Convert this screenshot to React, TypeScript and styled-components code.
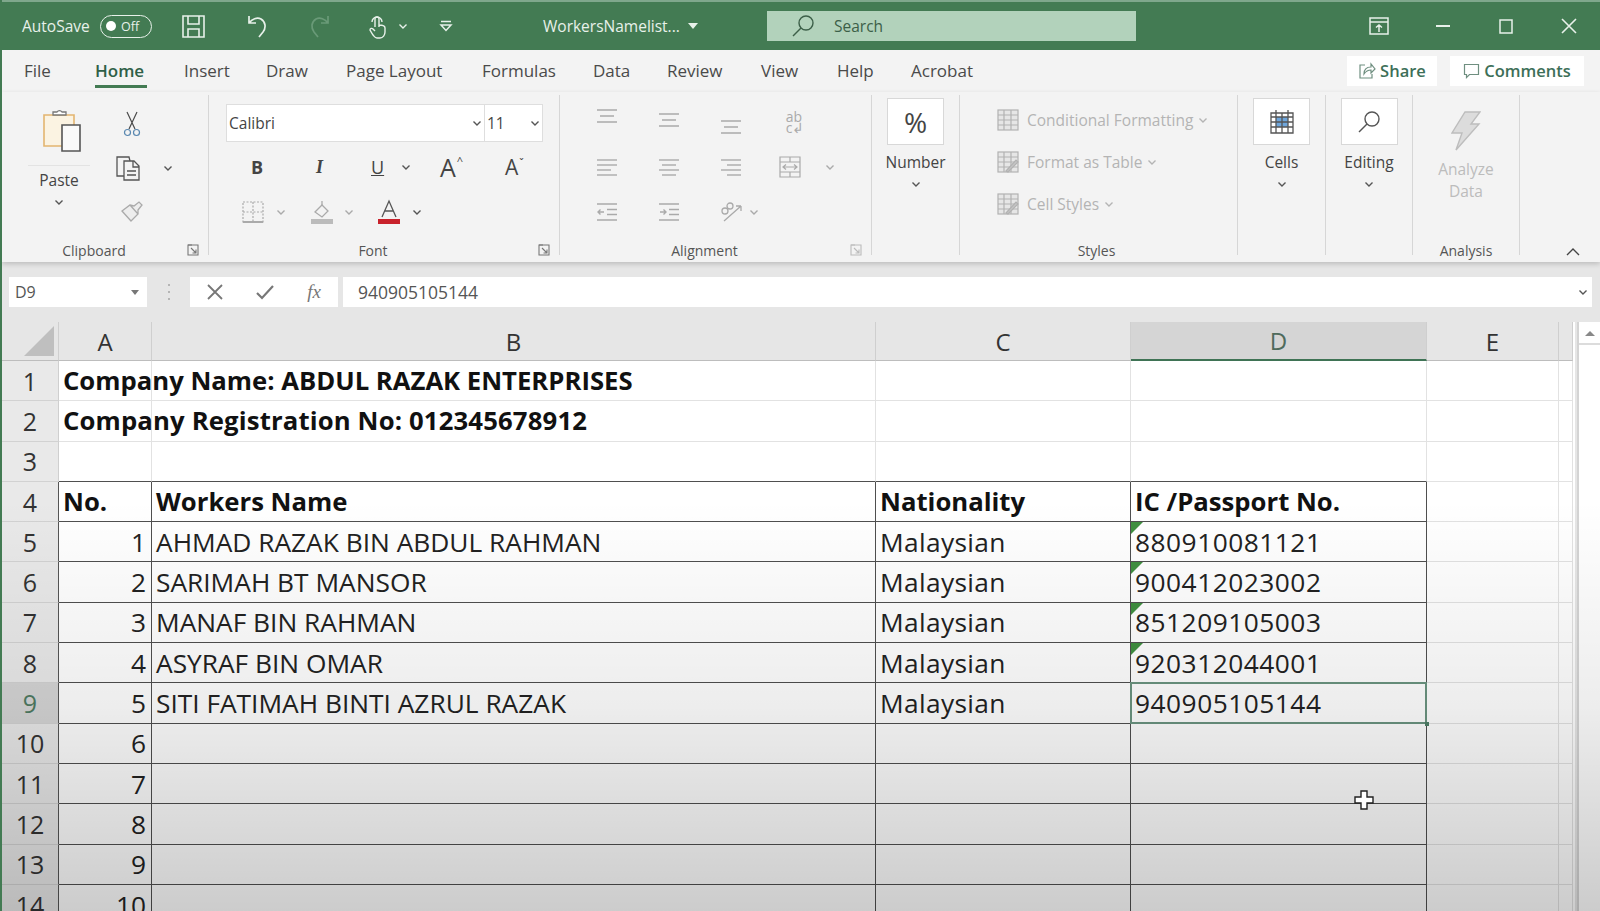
import React from "react";
import styled, { createGlobalStyle } from "styled-components";

const GlobalStyle = createGlobalStyle`
  html, body { margin: 0; padding: 0; height: 100%; overflow: hidden; background: #f3f3f3; }
  * { box-sizing: border-box; }
`;

const uiFont = `"Open Sans", "Liberation Sans", sans-serif`;
const cellFont = `"Open Sans", Lato, sans-serif`;

const Page = styled.div`
  position: relative;
  width: 1600px;
  height: 911px;
  overflow: hidden;
  display: flex;
  flex-direction: column;
  border-left: 2px solid #437b53;
  font-family: ${uiFont};
  color: #444;
`;

/* title bar */
const TitleBar = styled.div`
  height: 50px;
  flex: none;
  margin-left: -2px;
  display: flex;
  align-items: center;
  background: #437b53;
  border-top: 2px solid #7fa78c;
  padding-left: 22px;
  color: #e8f1ea;
  font-size: 15.5px;
`;
const AutoSave = styled.span`
  width: 78px;
`;
const Toggle = styled.div`
  width: 52px;
  height: 23px;
  border: 1.5px solid #e8f1ea;
  border-radius: 12px;
  display: flex;
  align-items: center;
  padding-left: 5px;
  gap: 5px;
  font-size: 12.5px;
  &::before {
    content: "";
    width: 10px;
    height: 10px;
    border-radius: 50%;
    background: #fff;
  }
`;
const Slot = styled.div<{ $w: number }>`
  width: ${(p) => p.$w}px;
  flex: none;
  display: flex;
  align-items: center;
`;
const FileTitle = styled.span`
  width: 145px;
  flex: none;
  white-space: nowrap;
`;
const SearchBox = styled.div`
  width: 369px;
  height: 30px;
  margin-left: 69px;
  flex: none;
  background: #b2d2bb;
  display: flex;
  align-items: center;
  padding-left: 24px;
  gap: 19px;
  color: #3c5f48;
  font-size: 15.5px;
`;
const WindowButtons = styled.div`
  margin-left: 233px;
  display: flex;
  align-items: center;
`;

/* tabs */
const TabRow = styled.div`
  height: 42px;
  flex: none;
  display: flex;
  align-items: center;
  background: #f3f3f3;
  padding-left: 22px;
  font-size: 17px;
`;
const Tab = styled.div<{ $w: number; $active?: boolean }>`
  width: ${(p) => p.$w}px;
  flex: none;
  height: 42px;
  line-height: 42px;
  white-space: nowrap;
  position: relative;
  color: ${(p) => (p.$active ? "#2f5f47" : "#4a4a4a")};
  font-weight: ${(p) => (p.$active ? 600 : 400)};
  &::after {
    content: "";
    display: ${(p) => (p.$active ? "block" : "none")};
    position: absolute;
    left: 0;
    width: 52px;
    top: 35px;
    height: 3px;
    background: #437b53;
  }
`;
const TabActions = styled.div`
  margin-left: 372px;
  display: flex;
  gap: 13px;
`;
const ActionButton = styled.div<{ $w: number }>`
  width: ${(p) => p.$w}px;
  height: 30px;
  background: #fff;
  display: flex;
  align-items: center;
  justify-content: center;
  gap: 4px;
  color: #3d6f58;
  font-size: 16.5px;
  font-weight: 600;
  line-height: 28px;
`;

/* ribbon */
const Ribbon = styled.div`
  height: 170px;
  flex: none;
  display: flex;
  background: #f3f3f3;
  padding-top: 3px;
  position: relative;
  box-shadow: 0 2px 5px rgba(0, 0, 0, 0.18);
  z-index: 2;
`;
const Group = styled.div<{ $w: number; $noLine?: boolean }>`
  width: ${(p) => p.$w}px;
  flex: none;
  height: 160px;
  position: relative;
  display: flex;
  flex-direction: column;
  border-right: ${(p) => (p.$noLine ? "none" : "1.5px solid #d6d6d6")};
`;
const GroupBody = styled.div`
  flex: 1;
  min-height: 0;
  display: flex;
`;
const GroupLabel = styled.div<{ $pr?: number }>`
  height: 13px;
  margin-bottom: -2px;
  padding-right: ${(p) => p.$pr ?? 0}px;
  text-align: center;
  font-size: 14px;
  line-height: 13px;
  color: #555;
`;
const Launcher = styled.div`
  position: absolute;
  right: 9px;
  bottom: -1px;
  display: flex;
`;
const PasteCol = styled.div`
  width: 62px;
  margin-left: 26px;
  flex: none;
  display: flex;
  flex-direction: column;
  align-items: center;
  padding-top: 13px;
  font-size: 15.5px;
`;
const PasteGlyph = styled.svg`
  margin-left: 6px;
`;
const PasteRule = styled.div`
  width: 62px;
  height: 1px;
  background: #e3e3e3;
  margin: 13px 0 3px;
`;
const ClipTools = styled.div`
  margin-left: 26px;
  display: flex;
  flex-direction: column;
  padding-top: 17px;
  gap: 20px;
`;
const ClipTool = styled.div<{ $pl?: number }>`
  height: 24px;
  padding-left: ${(p) => p.$pl ?? 0}px;
  display: flex;
  align-items: center;
  gap: 23px;
`;
const FontCol = styled.div`
  padding: 9px 0 0 17px;
  display: flex;
  flex-direction: column;
`;
const SelectRow = styled.div`
  display: flex;
  height: 38px;
  width: 317px;
  margin-bottom: 2px;
  background: #fff;
  border: 1.5px solid #dedede;
  font-size: 15.5px;
  color: #444;
`;
const SelectPart = styled.div<{ $w: number }>`
  width: ${(p) => p.$w}px;
  flex: none;
  display: flex;
  align-items: center;
  justify-content: space-between;
  padding: 0 2px 0 2px;
  border-right: 1.5px solid #dedede;
  &:last-child { border-right: none; flex: 1; }
`;
const ToolRow = styled.div<{ $h: number; $pl?: number }>`
  height: ${(p) => p.$h}px;
  padding-left: ${(p) => p.$pl ?? 0}px;
  display: flex;
  align-items: center;
`;
const Glyph = styled.span<{ $size?: number; $bold?: boolean; $italic?: boolean; $under?: boolean }>`
  font-size: ${(p) => p.$size ?? 18}px;
  font-weight: ${(p) => (p.$bold ? 700 : 400)};
  font-style: ${(p) => (p.$italic ? "italic" : "normal")};
  text-decoration: ${(p) => (p.$under ? "underline" : "none")};
  color: #444;
  line-height: 1;
  display: inline-flex;
  align-items: flex-start;
  font-family: ${(p) => (p.$italic ? `"Liberation Serif", serif` : uiFont)};
  sup { font-size: 11px; line-height: 1; margin-left: 1px; }
`;
const AlignGrid = styled.div`
  padding: 4px 0 0 16px;
  display: grid;
  grid-template-columns: 62px 62px 62px 62px 12px;
  grid-auto-rows: 45px;
  align-items: center;
  justify-items: center;
`;
const AlignOrient = styled.div`
  display: flex;
  align-items: center;
  gap: 6px;
  padding-left: 16px;
`;
const MergeGlyph = styled.svg`
  margin-right: 6px;
`;
const WrapGlyph = styled.div`
  font-size: 14px;
  line-height: 11px;
  color: #aaa;
  text-align: left;
  padding-left: 4px;
`;
const BigTool = styled.div`
  flex: 1;
  display: flex;
  flex-direction: column;
  align-items: center;
  padding-top: 3px;
  font-size: 15.5px;
`;
const BigBox = styled.div`
  width: 57px;
  height: 47px;
  background: #fff;
  border: 1.5px solid #d8d8d8;
  display: flex;
  align-items: center;
  justify-content: center;
  margin-bottom: 6px;
  color: #444;
  font-size: 28px;
`;
const ChevronLine = styled.div`
  height: 14px;
  margin-top: 4px;
  display: flex;
  align-items: center;
  justify-content: center;
`;
const StyleList = styled.div`
  padding: 10px 0 0 37px;
  display: flex;
  flex-direction: column;
  gap: 12px;
`;
const StyleItem = styled.div`
  height: 30px;
  display: flex;
  align-items: center;
  gap: 8px;
  color: #b4b4b4;
  font-size: 15.5px;
  white-space: nowrap;
  svg:last-child { margin-left: -3px; }
`;
const AnalyzeTool = styled.div`
  flex: 1;
  display: flex;
  flex-direction: column;
  align-items: center;
  gap: 7px;
  padding-top: 15px;
  color: #bcbcbc;
  font-size: 15.5px;
  line-height: 21.5px;
  text-align: center;
`;
const Collapse = styled.div`
  flex: 1;
  display: flex;
  align-items: flex-end;
  justify-content: center;
  padding: 0 0 0 26px;
  height: 161px;
`;

/* formula bar */
const FormulaBar = styled.div`
  height: 60px;
  flex: none;
  background: #e6e6e6;
  display: flex;
  padding: 15px 8px 0 7px;
  font-size: 16px;
  color: #555;
`;
const NameBox = styled.div`
  width: 138px;
  height: 30px;
  background: #fff;
  display: flex;
  align-items: center;
  justify-content: space-between;
  padding: 0 8px 0 6px;
`;
const BarDots = styled.div`
  width: 43px;
  height: 30px;
  display: flex;
  align-items: center;
  justify-content: center;
`;
const FxBox = styled.div`
  width: 148px;
  height: 30px;
  background: #fff;
  display: grid;
  grid-template-columns: 50px 50px 48px;
  align-items: center;
  justify-items: center;
`;
const FxGlyph = styled.span`
  font-family: "Liberation Serif", serif;
  font-style: italic;
  font-size: 19px;
  color: #777;
`;
const FormulaInput = styled.div`
  flex: 1;
  height: 30px;
  margin-left: 5px;
  background: #fff;
  display: flex;
  align-items: center;
  justify-content: space-between;
  padding: 0 4px 0 15px;
  font-size: 17.5px;
`;

/* sheet */
const SheetArea = styled.div`
  flex: 1;
  min-height: 0;
  display: flex;
  background: #e6e6e6;
  overflow: hidden;
`;
const SheetGrid = styled.div`
  width: 1573px;
  flex: none;
  display: grid;
  grid-template-columns: 57px 93px 724px 255px 296px 132px 14px;
  grid-template-rows: 39px;
  grid-auto-rows: 40.3px;
  background: #fff;
`;
const Corner = styled.div`
  background: #e6e6e6;
  border-right: 1px solid #cfcfcf;
  border-bottom: 1px solid #bdbdbd;
  display: flex;
  align-items: flex-end;
  justify-content: flex-end;
  padding: 0 3px 3px 0;
`;
const ColHead = styled.div<{ $sel?: boolean }>`
  background: ${(p) => (p.$sel ? "#d5d5d5" : "#e6e6e6")};
  border-right: 1px solid #cfcfcf;
  border-bottom: ${(p) => (p.$sel ? "2px solid #3f7355" : "1px solid #bdbdbd")};
  display: flex;
  align-items: center;
  justify-content: center;
  font-size: 24px;
  color: ${(p) => (p.$sel ? "#4f6b5c" : "#333")};
`;
const RowHead = styled.div<{ $sel?: boolean; $dark?: boolean }>`
  background: ${(p) => (p.$sel ? "#d5d5d5" : "#e9e9e9")};
  border-bottom: 1px solid #d2d2d2;
  border-right: 1px solid ${(p) => (p.$dark ? "#555" : "#cfcfcf")};
  display: flex;
  align-items: center;
  justify-content: center;
  font-family: ${cellFont};
  font-size: 25px;
  color: ${(p) => (p.$sel ? "#4f7b62" : "#333")};
`;
const Cell = styled.div<{ $right?: boolean; $bold?: boolean; $r?: boolean; $b?: boolean; $flag?: boolean; $sel?: boolean; $ls?: number }>`
  position: relative;
  display: flex;
  align-items: center;
  justify-content: ${(p) => (p.$right ? "flex-end" : "flex-start")};
  padding: 0 5px 0 4px;
  white-space: nowrap;
  font-family: ${cellFont};
  font-size: ${(p) => (p.$bold ? 25.7 : 26.3)}px;
  letter-spacing: ${(p) => p.$ls ?? 0}px;
  font-weight: ${(p) => (p.$bold ? 700 : 400)};
  color: ${(p) => (p.$bold ? "#111" : "#222")};
  border-right: 1px solid ${(p) => (p.$r ? "#4f4f4f" : "#e2e2e2")};
  border-bottom: 1px solid ${(p) => (p.$b ? "#4f4f4f" : "#e2e2e2")};
  &::before {
    content: "";
    display: ${(p) => (p.$flag ? "block" : "none")};
    position: absolute;
    left: 0;
    top: 0;
    border-top: 12px solid #3f8f3f;
    border-right: 12px solid transparent;
  }
  &::after {
    content: "";
    display: ${(p) => (p.$sel ? "block" : "none")};
    position: absolute;
    inset: -1px -1px -1px -1px;
    border: 2px solid #6b9480;
  }
`;
const FillHandle = styled.span`
  position: absolute;
  right: -3px;
  bottom: -3px;
  width: 4px;
  height: 4px;
  background: #4f7f68;
  z-index: 1;
`;
const Scrollbar = styled.div`
  flex: 1;
  margin-left: 2px;
  background: #fff;
  border-left: 2px solid #d4d4d4;
`;
const ScrollUp = styled.div`
  height: 22px;
  margin-top: 1px;
  display: flex;
  align-items: center;
  justify-content: center;
  border-bottom: 2px solid #dcdcdc;
  background: #fff;
  &::before {
    content: "";
    border-left: 5px solid transparent;
    border-right: 5px solid transparent;
    border-bottom: 5px solid #888;
  }
`;
const Dim = styled.div`
  position: absolute;
  left: -2px;
  right: 0;
  top: 500px;
  bottom: 0;
  z-index: 3;
  pointer-events: none;
  background: linear-gradient(to bottom, rgba(0, 0, 0, 0) 0%, rgba(0, 0, 0, 0.07) 50%, rgba(0, 0, 0, 0.2) 100%);
`;
const CursorMark = styled.svg`
  position: absolute;
  left: 1352px;
  top: 790px;
  z-index: 4;
`;

/* icons */
const Chev = ({ c = "#555", s = 10 }: { c?: string; s?: number }) => (
  <svg width={s} height={s} viewBox="0 0 10 10" fill="none" stroke={c} strokeWidth="1.4" style={{ flex: "none" }}>
    <path d="M1.5 3.5 5 7l3.5-3.5" />
  </svg>
);
const Lines = ({ kind, c = "#aaa" }: { kind: "c" | "l" | "r"; c?: string }) => {
  const s = kind === "l" ? [[1, 21], [1, 21], [1, 15], [1, 21]] : kind === "r" ? [[1, 21], [7, 21], [1, 21], [7, 21]] : [[1, 21], [4, 18], [1, 21], [4, 18]];
  return (
    <svg width="22" height="20" viewBox="0 0 22 20" stroke={c} strokeWidth="1.4">
      {s.map(([a, b], i) => (
        <path key={i} d={`M${a} ${3 + i * 5}H${b}`} />
      ))}
    </svg>
  );
};
const VAlign = ({ top }: { top: number }) => (
  <svg width="22" height="30" viewBox="0 0 22 30" stroke="#aaa" strokeWidth="1.4">
    <path d={`M1 ${top}H21M4 ${top + 6}H18M1 ${top + 12}H21`} />
  </svg>
);
const Indent = ({ rev }: { rev?: boolean }) => (
  <svg width="22" height="20" viewBox="0 0 22 20" stroke="#aaa" strokeWidth="1.4" fill="none">
    <path d="M1 2H21M11 7.5H21M11 12.5H21M1 18H21" />
    <path d={rev ? "M8 10H2M4.5 7.5 2 10l2.5 2.5" : "M2 10H8M5.5 7.5 8 10l-2.5 2.5"} />
  </svg>
);
const LauncherIcon = ({ c = "#777" }: { c?: string }) => (
  <svg width="12" height="12" viewBox="0 0 12 12" fill="none" stroke={c} strokeWidth="1.1">
    <path d="M5 1H1v10h10V7" />
    <path d="M1 1h10v6M4 4l5 5M9 5.5V9H5.5" />
  </svg>
);
const TableIcon = ({ brush }: { brush?: boolean }) => (
  <svg width="22" height="22" viewBox="0 0 22 22" fill="none" stroke="#b2b2b2" strokeWidth="1.2">
    <rect x="1" y="1" width="20" height="20" fill="#e6e6e6" />
    <path d="M1 6h20M1 11h20M1 16h20M7 1v20M14 1v20" />
    {brush && <path d="M9 20 19 9l2 2-10 10z" fill="#c4c4c4" />}
  </svg>
);

const rows: [string, string, string, string][] = [
  ["1", "AHMAD RAZAK BIN ABDUL RAHMAN", "Malaysian", "880910081121"],
  ["2", "SARIMAH BT MANSOR", "Malaysian", "900412023002"],
  ["3", "MANAF BIN RAHMAN", "Malaysian", "851209105003"],
  ["4", "ASYRAF BIN OMAR", "Malaysian", "920312044001"],
  ["5", "SITI FATIMAH BINTI AZRUL RAZAK", "Malaysian", "940905105144"],
  ["6", "", "", ""],
  ["7", "", "", ""],
  ["8", "", "", ""],
  ["9", "", "", ""],
  ["10", "", "", ""],
];

const tabs: [string, number][] = [
  ["File", 71], ["Home", 89], ["Insert", 82], ["Draw", 80], ["Page Layout", 136], ["Formulas", 111],
  ["Data", 74], ["Review", 94], ["View", 76], ["Help", 74], ["Acrobat", 64],
];

const SheetRows = () => (
  <>
    {[1, 2, 3].map((n) => (
      <React.Fragment key={n}>
        <RowHead>{n}</RowHead>
        <Cell $bold $b={n === 3} $ls={n === 2 ? 0.15 : 0}>
          {n === 1 && "Company Name: ABDUL RAZAK ENTERPRISES"}
          {n === 2 && "Company Registration No: 012345678912"}
        </Cell>
        <Cell $b={n === 3} />
        <Cell $b={n === 3} />
        <Cell $b={n === 3} />
        <Cell />
        <Cell />
      </React.Fragment>
    ))}
    <RowHead $dark>4</RowHead>
    <Cell $bold $r $b>No.</Cell>
    <Cell $bold $r $b>Workers Name</Cell>
    <Cell $bold $r $b>Nationality</Cell>
    <Cell $bold $r $b>IC /Passport No.</Cell>
    <Cell />
    <Cell />
    {rows.map((r, i) => (
      <React.Fragment key={r[0]}>
        <RowHead $dark $sel={i === 4}>{i + 5}</RowHead>
        <Cell $right $r $b>{r[0]}</Cell>
        <Cell $r $b>{r[1]}</Cell>
        <Cell $r $b $ls={0.35}>{r[2]}</Cell>
        <Cell $r $b $ls={0.5} $flag={i < 4} $sel={i === 4}>
          {r[3]}
          {i === 4 && <FillHandle />}
        </Cell>
        <Cell />
        <Cell />
      </React.Fragment>
    ))}
  </>
);

export default function App() {
  return (
    <Page>
      <GlobalStyle />
      <TitleBar>
        <AutoSave>AutoSave</AutoSave>
        <Toggle>Off</Toggle>
        <Slot $w={30} />
        <Slot $w={65}>
          <svg width="23" height="23" viewBox="0 0 23 23" fill="none" stroke="#e8f1ea" strokeWidth="1.6">
            <path d="M1 1h21v21H1zM6 1v8h11V1M6 22v-8h11v8" />
          </svg>
        </Slot>
        <Slot $w={61}>
          <svg width="22" height="24" viewBox="0 0 22 24" fill="none" stroke="#e8f1ea" strokeWidth="1.7">
            <path d="M2 2v7h7M2 9c3-4 8-6 12-4 5 3 5 9 2 13l-4 5" />
          </svg>
        </Slot>
        <Slot $w={61}>
          <svg width="22" height="24" viewBox="0 0 22 24" fill="none" stroke="#6a9a78" strokeWidth="1.7">
            <path d="M20 2v7h-7M20 9c-3-4-8-6-12-4-5 3-5 9-2 13l4 5" />
          </svg>
        </Slot>
        <Slot $w={29}>
          <svg width="18" height="25" viewBox="0 0 18 25" fill="none" stroke="#e8f1ea" strokeWidth="1.4">
            <path d="M6 13V5a2 2 0 0 1 4 0v8M10 11c3 0 6 1 6 3v4c0 3-2 6-5 6H8c-2 0-3-2-4-3l-3-5c0-2 2-2 3-1l2 2" />
            <path d="M3 8a5 5 0 1 1 10 0" />
          </svg>
        </Slot>
        <Slot $w={41}><Chev c="#e8f1ea" /></Slot>
        <Slot $w={104}>
          <svg width="14" height="12" viewBox="0 0 14 12" fill="none" stroke="#e8f1ea" strokeWidth="1.5">
            <path d="M2 1.5h10M2 5h10L7 10.5z" />
          </svg>
        </Slot>
        <FileTitle>WorkersNamelist...</FileTitle>
        <svg width="10" height="6" viewBox="0 0 10 6" fill="#e8f1ea"><path d="M0 0h10L5 6z" /></svg>
        <SearchBox>
          <svg width="24" height="22" viewBox="0 0 24 22" fill="none" stroke="#3c5f48" strokeWidth="1.4">
            <circle cx="15" cy="8" r="7" />
            <path d="M10 13 2 21" />
          </svg>
          Search
        </SearchBox>
        <WindowButtons>
          <Slot $w={67}>
            <svg width="20" height="18" viewBox="0 0 20 18" fill="none" stroke="#e8f1ea" strokeWidth="1.5">
              <path d="M1 1h18v16H1zM1 5h18M10 15V8M7 10.5 10 8l3 2.5" />
            </svg>
          </Slot>
          <Slot $w={63}>
            <svg width="14" height="2" viewBox="0 0 14 2"><path d="M0 1h14" stroke="#e8f1ea" strokeWidth="2" /></svg>
          </Slot>
          <Slot $w={62}>
            <svg width="14" height="15" viewBox="0 0 14 15" fill="none" stroke="#e8f1ea" strokeWidth="1.5"><path d="M1 1h12v13H1z" /></svg>
          </Slot>
          <Slot $w={20}>
            <svg width="16" height="16" viewBox="0 0 16 16" stroke="#e8f1ea" strokeWidth="1.6"><path d="m1 1 14 14M15 1 1 15" /></svg>
          </Slot>
        </WindowButtons>
      </TitleBar>

      <TabRow>
        {tabs.map(([t, w]) => (
          <Tab key={t} $w={w} $active={t === "Home"}>{t}</Tab>
        ))}
        <TabActions>
          <ActionButton $w={90}>
            <svg width="18" height="18" viewBox="0 0 18 18" fill="none" stroke="#6f8f80" strokeWidth="1.2">
              <path d="M7 3H2v13h12v-4M6 12c0-5 3-7 7-7V2l4 5-4 4V8c-3 0-5 1-7 4z" />
            </svg>
            Share
          </ActionButton>
          <ActionButton $w={134}>
            <svg width="17" height="17" viewBox="0 0 17 17" fill="none" stroke="#6f8f80" strokeWidth="1.2">
              <path d="M1.5 1.5h14v10h-9l-3 3v-3h-2z" />
            </svg>
            Comments
          </ActionButton>
        </TabActions>
      </TabRow>

      <Ribbon>
        <Group $w={207}>
          <GroupBody>
            <PasteCol>
              <PasteGlyph width="40" height="44" viewBox="0 0 40 44" fill="none">
                <path d="M2 7h30v31H2z" fill="#fbf3e2" stroke="#e3b570" strokeWidth="1.6" />
                <path d="M11 7V4h4a3 3 0 0 1 5 0h4v3z" fill="#fff" stroke="#777" strokeWidth="1.3" />
                <path d="M20 17h18v26H20z" fill="#fafafa" stroke="#555" strokeWidth="1.6" />
              </PasteGlyph>
              <PasteRule />
              Paste
              <ChevronLine><Chev /></ChevronLine>
            </PasteCol>
            <ClipTools>
              <ClipTool $pl={7}>
                <svg width="18" height="26" viewBox="0 0 18 26" fill="none" stroke="#4a4a4a" strokeWidth="1.2">
                  <path d="M4 1 12 18M14 1 6 18" />
                  <circle cx="4.5" cy="21.5" r="3" stroke="#5a88b0" />
                  <circle cx="13.5" cy="21.5" r="3" stroke="#5a88b0" />
                </svg>
              </ClipTool>
              <ClipTool>
                <svg width="24" height="25" viewBox="0 0 24 25" fill="none" stroke="#555" strokeWidth="1.3">
                  <path d="M8 20H1V1h12l1 4" />
                  <path d="M8 5h10l5 5v14H8zM11 15h9M11 19h9M17 5v6h6" />
                </svg>
                <Chev />
              </ClipTool>
              <ClipTool $pl={5}>
                <svg width="22" height="22" viewBox="0 0 22 22" fill="none" stroke="#aaa" strokeWidth="1.3">
                  <path d="M1 10 9 4l8 9-7 7zM9 4l4 1 5-4 3 3-4 5 0 4" fill="#ededed" />
                </svg>
              </ClipTool>
            </ClipTools>
          </GroupBody>
          <GroupLabel $pr={22}>Clipboard</GroupLabel>
          <Launcher><LauncherIcon /></Launcher>
        </Group>

        <Group $w={351}>
          <GroupBody>
            <FontCol>
              <SelectRow>
                <SelectPart $w={258}>Calibri<Chev /></SelectPart>
                <SelectPart $w={58}>11<Chev /></SelectPart>
              </SelectRow>
              <ToolRow $h={46} $pl={25}>
                <Slot $w={65}><Glyph $bold>B</Glyph></Slot>
                <Slot $w={55}><Glyph $italic $bold>I</Glyph></Slot>
                <Slot $w={30}><Glyph $under>U</Glyph></Slot>
                <Slot $w={39}><Chev /></Slot>
                <Slot $w={65}><Glyph $size={25}>A<sup>^</sup></Glyph></Slot>
                <Slot $w={30}><Glyph $size={21}>A<sup>ˇ</sup></Glyph></Slot>
              </ToolRow>
              <ToolRow $h={44} $pl={16}>
                <Slot $w={34}>
                  <svg width="22" height="22" viewBox="0 0 22 22" fill="none" stroke="#aaa" strokeWidth="1.2">
                    <path d="M1 1h20v20H1z" strokeDasharray="2 1.5" />
                    <path d="M11 1v20M1 11h20" strokeDasharray="2 1.5" />
                    <path d="M1 21h20" strokeDasharray="0" strokeWidth="2" />
                  </svg>
                </Slot>
                <Slot $w={35}><Chev c="#aaa" /></Slot>
                <Slot $w={33}>
                  <svg width="22" height="24" viewBox="0 0 22 24" fill="none" stroke="#aaa" strokeWidth="1.3">
                    <path d="M4 12 11 5l6 6-6 6z" />
                    <path d="M11 1v5" />
                    <rect x="0" y="19" width="22" height="5" fill="#bbb" stroke="none" />
                  </svg>
                </Slot>
                <Slot $w={34}><Chev c="#aaa" /></Slot>
                <Slot $w={34}>
                  <svg width="22" height="26" viewBox="0 0 22 26" fill="none" stroke="#555" strokeWidth="1.3">
                    <path d="M4 18 11 2l7 16M6.5 12h9" />
                    <rect x="0" y="20" width="22" height="5" fill="#c8212b" stroke="none" />
                  </svg>
                </Slot>
                <Slot $w={30}><Chev /></Slot>
              </ToolRow>
            </FontCol>
          </GroupBody>
          <GroupLabel $pr={22}>Font</GroupLabel>
          <Launcher><LauncherIcon /></Launcher>
        </Group>

        <Group $w={312}>
          <GroupBody>
            <AlignGrid>
              <VAlign top={3} />
              <VAlign top={7} />
              <VAlign top={14} />
              <WrapGlyph>ab<br />c↲</WrapGlyph>
              <span />
              <Lines kind="l" />
              <Lines kind="c" />
              <Lines kind="r" />
              <MergeGlyph width="22" height="22" viewBox="0 0 22 22" fill="none" stroke="#aaa" strokeWidth="1.2">
                <path d="M1 1h20v20H1zM1 6h20M1 16h20M11 1v5M11 16v5M4 11h14M7 8.5 4 11l3 2.5M15 8.5l3 2.5-3 2.5" />
              </MergeGlyph>
              <Chev c="#aaa" />
              <Indent rev />
              <Indent />
              <AlignOrient>
                <svg width="24" height="22" viewBox="0 0 24 22" fill="none" stroke="#aaa" strokeWidth="1.3">
                  <path d="M5 20 22 5M22 5h-5M22 5v5" />
                  <circle cx="6" cy="10" r="3" />
                  <circle cx="11" cy="5" r="3" />
                </svg>
                <Chev c="#aaa" />
              </AlignOrient>
              <span />
              <span />
            </AlignGrid>
          </GroupBody>
          <GroupLabel $pr={22}>Alignment</GroupLabel>
          <Launcher><LauncherIcon c="#bbb" /></Launcher>
        </Group>

        <Group $w={88}>
          <BigTool>
            <BigBox>%</BigBox>
            Number
            <ChevronLine><Chev /></ChevronLine>
          </BigTool>
        </Group>

        <Group $w={278}>
          <GroupBody>
            <StyleList>
              <StyleItem><TableIcon />Conditional Formatting<Chev c="#b4b4b4" /></StyleItem>
              <StyleItem><TableIcon brush />Format as Table<Chev c="#b4b4b4" /></StyleItem>
              <StyleItem><TableIcon brush />Cell Styles<Chev c="#b4b4b4" /></StyleItem>
            </StyleList>
          </GroupBody>
          <GroupLabel $pr={4}>Styles</GroupLabel>
        </Group>

        <Group $w={88}>
          <BigTool>
            <BigBox>
              <svg width="24" height="25" viewBox="0 0 24 25" fill="none" stroke="#555" strokeWidth="1.3">
                <rect x="6" y="8" width="12" height="10" fill="#6ea6dc" stroke="none" />
                <path d="M1 4h22v20H1zM1 8h22M1 13h22M1 18h22M6 4v20M12 4v20M18 4v20" />
                <path d="M6 1v3M18 1v3" />
              </svg>
            </BigBox>
            Cells
            <ChevronLine><Chev /></ChevronLine>
          </BigTool>
        </Group>

        <Group $w={87}>
          <BigTool>
            <BigBox>
              <svg width="24" height="24" viewBox="0 0 24 24" fill="none" stroke="#555" strokeWidth="1.4">
                <circle cx="15" cy="9" r="7" />
                <path d="M10 14 2 22" />
              </svg>
            </BigBox>
            Editing
            <ChevronLine><Chev /></ChevronLine>
          </BigTool>
        </Group>

        <Group $w={107}>
          <GroupBody>
            <AnalyzeTool>
              <svg width="30" height="42" viewBox="0 0 30 40" fill="#dcdcdc" stroke="#bdbdbd" strokeWidth="1.4">
                <path d="M14 1h15l-9 12h8L5 39l6-17H1z" />
              </svg>
              <span>Analyze<br />Data</span>
            </AnalyzeTool>
          </GroupBody>
          <GroupLabel>Analysis</GroupLabel>
        </Group>

        <Collapse>
          <svg width="14" height="8" viewBox="0 0 14 8" fill="none" stroke="#444" strokeWidth="1.4"><path d="m1 7 6-6 6 6" /></svg>
        </Collapse>
      </Ribbon>

      <FormulaBar>
        <NameBox>D9
          <svg width="8" height="5" viewBox="0 0 8 5" fill="#777"><path d="M0 0h8L4 5z" /></svg>
        </NameBox>
        <BarDots>
          <svg width="4" height="18" viewBox="0 0 4 18" fill="#b5b5b5">
            <rect x="1" y="1" width="2" height="2" /><rect x="1" y="8" width="2" height="2" /><rect x="1" y="15" width="2" height="2" />
          </svg>
        </BarDots>
        <FxBox>
          <svg width="16" height="16" viewBox="0 0 16 16" stroke="#777" strokeWidth="1.8"><path d="m1 1 14 14M15 1 1 15" /></svg>
          <svg width="18" height="16" viewBox="0 0 18 16" fill="none" stroke="#777" strokeWidth="2.2"><path d="m1 9 5 5L17 2" /></svg>
          <FxGlyph>fx</FxGlyph>
        </FxBox>
        <FormulaInput>940905105144<Chev /></FormulaInput>
      </FormulaBar>

      <SheetArea>
        <SheetGrid>
          <Corner>
            <svg width="32" height="32" viewBox="0 0 32 32"><path d="M31 1v30H1z" fill="#bfbfbf" /></svg>
          </Corner>
          <ColHead>A</ColHead>
          <ColHead>B</ColHead>
          <ColHead>C</ColHead>
          <ColHead $sel>D</ColHead>
          <ColHead>E</ColHead>
          <ColHead />
          <SheetRows />
        </SheetGrid>
        <Scrollbar><ScrollUp /></Scrollbar>
      </SheetArea>

      <Dim />
      <CursorMark width="20" height="20" viewBox="0 0 20 20" fill="#fff" stroke="#222" strokeWidth="1.4">
        <path d="M7 1h6v6h6v6h-6v6H7v-6H1V7h6z" />
      </CursorMark>
    </Page>
  );
}
